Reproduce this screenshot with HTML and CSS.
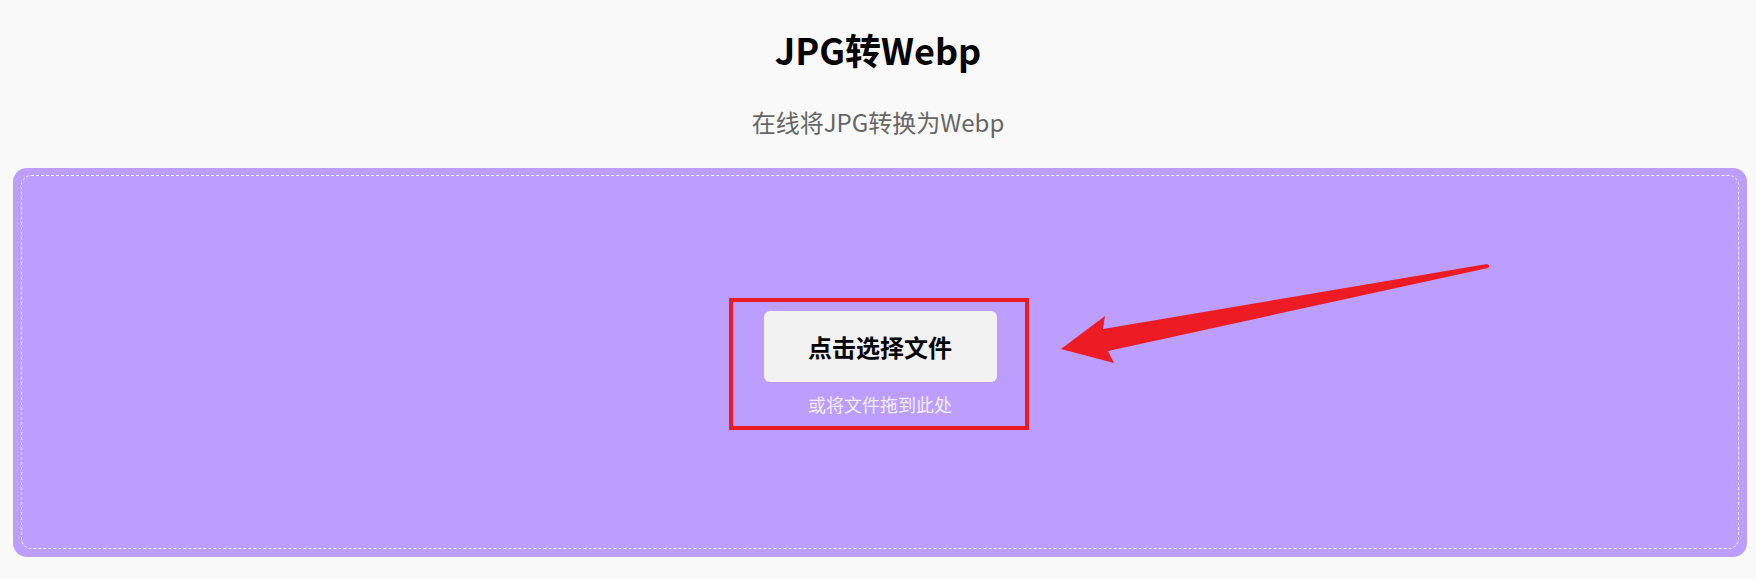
FILE: index.html
```html
<!DOCTYPE html>
<html lang="zh-CN">
<head>
    <meta charset="UTF-8">
    <title>JPG转Webp</title>
    <link rel="stylesheet" href="styles.css">
</head>
<body>
<div id="page">
    <div class="header">
        <h1 class="title">JPG转Webp</h1>
        <p class="subtitle">在线将JPG转换为Webp</p>
    </div>
    <div class="drop-box">
        <div class="drop-inner">
            <button class="pick-btn" type="button">点击选择文件</button>
            <p class="drop-tip">或将文件拖到此处</p>
        </div>
    </div>
    <!-- screenshot annotation -->
    <svg class="mark" width="1756" height="579" viewBox="0 0 1756 579">
        <rect x="731" y="300" width="296" height="128" fill="none" stroke="#ed1c24" stroke-width="4"/>
        <path d="M1061 349 L1105 316 L1103 329 L1487 264 Q1491 265.5 1488 268 L1108 351 L1114 363 Z" fill="#ed1c24"/>
    </svg>
</div>
</body>
</html>
```

FILE: styles.css
```css
*{
    margin: 0;
    padding: 0;
    box-sizing: border-box;
}
body{
    background: #f9f9f9;
    font-family: "Noto Sans CJK SC", "Noto Sans", sans-serif;
    color: #000;
}
#page{
    position: relative;
    width: 1756px;
    height: 579px;
    overflow: hidden;
}
.header{
    text-align: center;
    padding-top: 27px;
}
.title{
    font-size: 36px;
    line-height: 44px;
    font-weight: 700;
}
.subtitle{
    margin-top: 36px;
    font-size: 24px;
    line-height: 30px;
    color: #666;
}
.drop-box{
    margin: 31px 9px 0 13px;
    height: 389px;
    background: #bb9eff;
    border-radius: 14px;
    padding: 7px 8px 8px 8px;
}
.drop-inner{
    height: 100%;
    border: 1px dashed rgba(255,255,255,0.85);
    border-radius: 10px;
    display: flex;
    flex-direction: column;
    align-items: center;
    justify-content: center;
    padding-top: 4px;
}
.pick-btn{
    width: 233px;
    height: 71px;
    border: 0;
    border-radius: 6px;
    background: #f2f2f2;
    font-family: "Noto Sans CJK SC", "Noto Sans", sans-serif;
    font-size: 24px;
    font-weight: 700;
    color: #000;
}
.drop-tip{
    margin-top: 10px;
    font-size: 18px;
    line-height: 25px;
    color: #f3edff;
}
.mark{
    position: absolute;
    left: 0;
    top: 0;
    pointer-events: none;
}
```
